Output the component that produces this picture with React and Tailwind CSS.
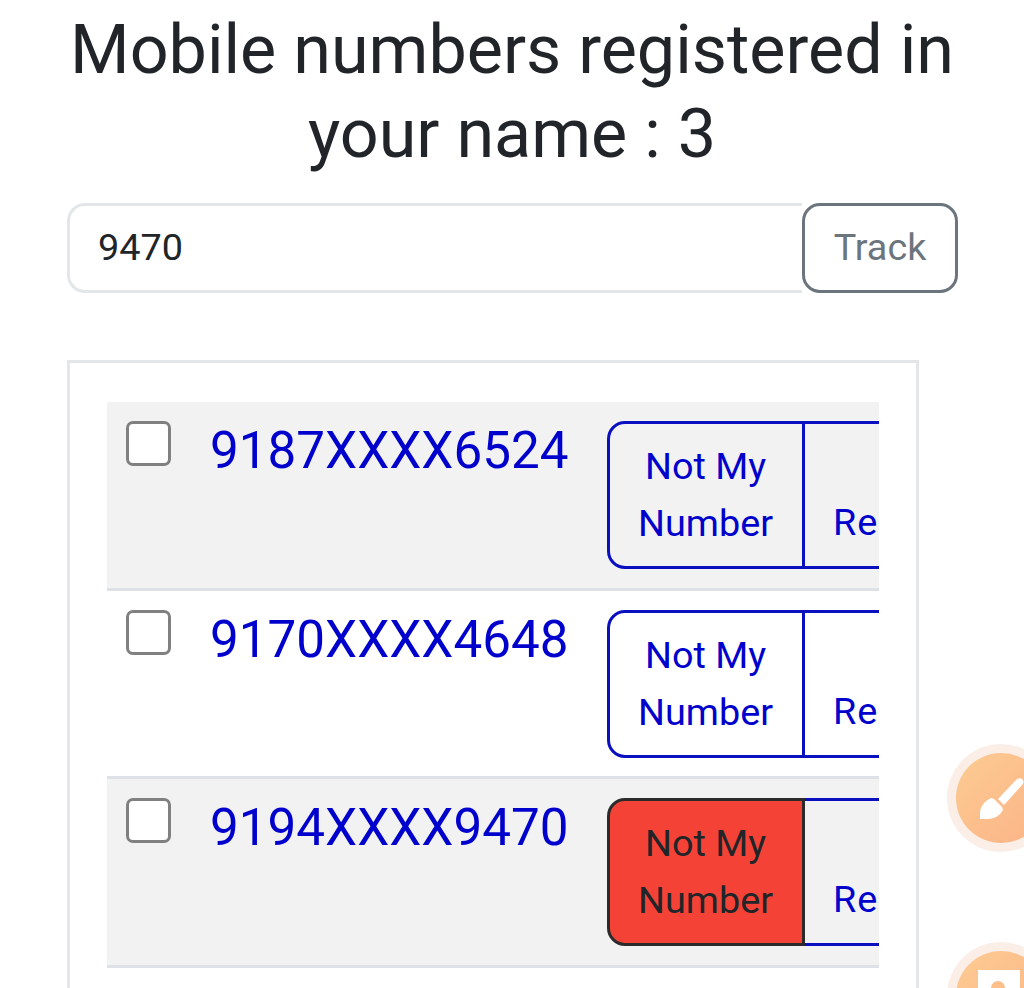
import React from 'react';

const rows = [
  { id: 1, number: '9187XXXX6524', bg: 'bg-[#f2f2f2]', selected: false },
  { id: 2, number: '9170XXXX4648', bg: 'bg-white', selected: false },
  { id: 3, number: '9194XXXX9470', bg: 'bg-[#f2f2f2]', selected: true },
];

const NumberRow = ({ number, bg, selected }) => {
  return (
    <div className={`flex h-[188.5px] shrink-0 border-b-[3px] border-[#dee2e6] pt-[19px] ${bg}`}>
      <div className="ml-[19px] h-[45px] w-[45px] shrink-0 rounded-[7px] border-[3px] border-[#808080] bg-white" />
      <div className="ml-[39px] w-[397px] shrink-0 pt-[2px] text-[51.2px] leading-[56px] text-[#0000cd]">{number}</div>
      <div className="flex h-[148px] w-[500px] shrink-0 text-[37.8px] leading-[57px]">
        <button
          className={`relative z-10 h-full w-[198px] shrink-0 rounded-l-[18px] border-[3px] pr-px text-center ${
            selected ? 'border-[#2b2b2b] bg-[#f44336] text-[#212529]' : 'border-[#0a0fc0] text-[#0000cd]'
          }`}
        >
          Not My
          <br />
          Number
        </button>
        <button className="-ml-[3px] flex h-full w-[305px] shrink-0 items-end border-[3px] border-[#0a0fc0] pb-[15px] pl-[28px] tracking-[1px] text-[#0000cd]">
          Required
        </button>
      </div>
    </div>
  );
};

const FloatButton = ({ className, children }) => {
  return (
    <div className={`absolute left-[947px] h-[108px] w-[108px] rounded-full bg-[#fbeee7] p-[9px] ${className}`}>
      <div className="relative h-full w-full overflow-hidden rounded-full bg-gradient-to-br from-[#fdcb92] to-[#fbb387]">
        {children}
      </div>
    </div>
  );
};

export default function App() {
  return (
    <div className="relative h-[988px] w-[1024px] overflow-hidden bg-white font-['Roboto',sans-serif] text-[#212529]">
      <h1 className="pt-[8px] text-center text-[68.25px] leading-[84px]">
        Mobile numbers registered in
        <br />
        your name : 3
      </h1>

      <div className="mt-[27px] ml-[67px] flex h-[90px] w-[891px]">
        <input
          readOnly
          value="9470"
          className="h-full min-w-0 flex-1 rounded-l-[18px] border-[3px] border-r-0 border-[#e3e6e9] bg-white pb-[2px] pl-[28px] text-[37.8px] text-[#212529] outline-none"
        />
        <button className="h-full w-[156px] shrink-0 rounded-[18px] border-[3px] border-[#6c757d] bg-white pb-[2px] text-[37.8px] text-[#6c757d]">
          Track
        </button>
      </div>

      <div className="mt-[67px] ml-[67px] h-[700px] w-[852px] border-[3px] border-[#e3e6e9] px-[37px] pt-[39px]">
        <div className="overflow-hidden">
          {rows.map((row) => (
            <NumberRow key={row.id} number={row.number} bg={row.bg} selected={row.selected} />
          ))}
        </div>
      </div>

      <FloatButton className="top-[744px]">
        <svg viewBox="0 0 90 90" className="h-full w-full">
          <path d="M42 46 L60 27 Q63 24 66 26 Q69 29 66 32 L48 52 Z" fill="#fff" />
          <path d="M24 66 V59 Q25 50 35 45 L38 46 L46 54 L47 57 Q42 66 31 66 Z" fill="#fff" />
        </svg>
      </FloatButton>
      <FloatButton className="top-[942px]">
        <svg viewBox="0 0 90 90" className="h-full w-full">
          <path d="M22 19 H64 V70 H22 Z" fill="#fff" />
          <circle cx="42" cy="37" r="7" fill="#fdc08d" />
        </svg>
      </FloatButton>
    </div>
  );
}
